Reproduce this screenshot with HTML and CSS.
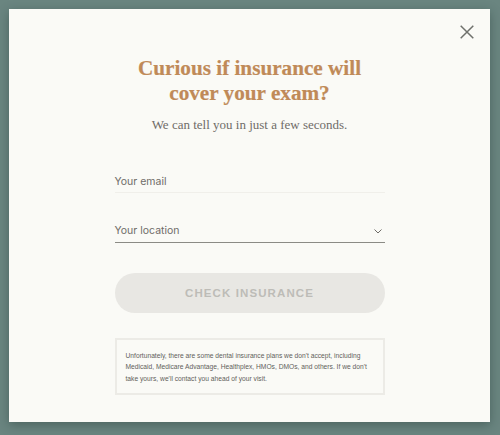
FILE: index.html
```html
<!DOCTYPE html>
<html lang="en">
<head>
<meta charset="utf-8">
<title>Insurance check</title>
<link rel="stylesheet" href="styles.css">
</head>
<body>
<main class="modal">
  <button class="close" aria-label="Close">
    <svg width="14" height="14" viewBox="0 0 14 14"><path d="M.7.7l12.6 12.6M13.3.7L.7 13.3"/></svg>
  </button>
  <h1 class="title">Curious if insurance will<br>cover your exam?</h1>
  <p class="sub">We can tell you in just a few seconds.</p>
  <form class="form">
    <div class="field field-email">Your email</div>
    <div class="field field-location">
      <span>Your location</span>
      <svg width="8" height="5" viewBox="0 0 8 5"><path d="M.5.5L4 4 7.5.5"/></svg>
    </div>
    <div class="submit">CHECK INSURANCE</div>
    <p class="note">Unfortunately, there are some dental insurance plans we don't accept, including Medicaid, Medicare Advantage, Healthplex, HMOs, DMOs, and others. If we don't take yours, we'll contact you ahead of your visit.</p>
  </form>
</main>
</body>
</html>
```

FILE: styles.css
```css
* { box-sizing: border-box; }
html, body { height: 100%; }
body {
  margin: 0;
  padding: 9px 10px 13px 9px;
  background: #6a8580;
  overflow: hidden;
  font-family: "Inter", sans-serif;
}
.modal {
  position: relative;
  height: 413px;
  background: #fafaf6;
  padding-top: 47px;
  display: flex;
  flex-direction: column;
  align-items: center;
  box-shadow: 0 3px 10px rgba(30, 50, 45, .4);
}
.close {
  position: absolute;
  top: 16px;
  right: 16px;
  width: 14px;
  height: 14px;
  padding: 0;
  border: 0;
  background: none;
  display: flex;
}
.close path { stroke: #6f716c; stroke-width: 1.5; fill: none; }
.title {
  margin: 0;
  font: 700 21.2px/25px "Liberation Serif", serif;
  -webkit-text-stroke: .2px #c08a58;
  color: #c08a58;
  text-align: center;
}
.sub {
  margin: 10px 0 0;
  font: 400 13px/18px "Liberation Serif", serif;
  color: #6f6c68;
  text-align: center;
}
.form {
  width: 270px;
  margin-top: 41px;
  display: flex;
  flex-direction: column;
}
.field {
  font-size: 10.5px;
  line-height: 14px;
  color: #6f6c68;
  display: flex;
  align-items: center;
  justify-content: space-between;
}
.field-email {
  padding-bottom: 3px;
  border-bottom: 1px solid #f0efea;
}
.field-location {
  margin-top: 31px;
  padding-bottom: 4px;
  border-bottom: 1px solid #8b8b85;
}
.field-location svg { margin-right: 3px; }
.field-location path { stroke: #6f6c68; fill: none; stroke-width: 1; }
.submit {
  margin-top: 30px;
  height: 40px;
  border-radius: 20px;
  background: #e8e7e3;
  color: #bdbcb7;
  font: 700 11.5px/40px "Liberation Sans", sans-serif;
  letter-spacing: 1.1px;
  text-align: center;
}
.note {
  margin: 25px 0 0;
  height: 57px;
  padding: 10px 9px;
  border: 2px solid #ecebe6;
  font: 400 6.7px/11.3px "Liberation Sans", sans-serif;
  color: #625f5b;
}
```
